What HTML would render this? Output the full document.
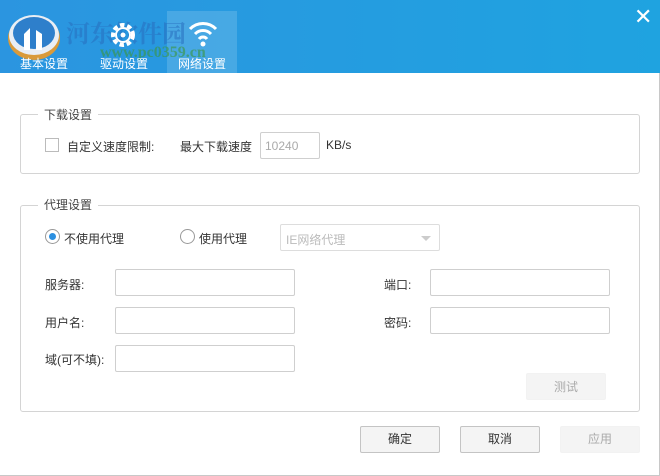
<!DOCTYPE html><html><head><meta charset="utf-8"><style>
*{margin:0;padding:0;box-sizing:border-box}
body{width:660px;height:476px;background:#fff;font-family:"Liberation Sans","Noto Sans CJK SC",sans-serif;font-size:12px;color:#333;position:relative;overflow:hidden;border-right:1px solid #c8c8c8;border-bottom:1px solid #c8c8c8}
.a{position:absolute}
.hdr{left:0;top:0;width:660px;height:73px;background:linear-gradient(90deg,#2b95e0,#1fa3e0)}
.tab{color:#fff;font-size:12px}
.grp{border:1px solid #d4d4d4;border-radius:3px}
.leg{background:#fff;padding:0 6px;color:#444}
.in{border:1px solid #cfcfcf;background:#fff;border-radius:2px}
.btn{border:1px solid #c4c4c4;background:#f4f4f4;border-radius:2px;text-align:center;line-height:24px;font-size:12px}
</style></head><body>
<div class="a hdr"></div>
<div class="a" style="left:167px;top:11px;width:70px;height:62px;background:rgba(255,255,255,0.15)"></div>
<svg class="a" style="left:6px;top:12px" width="56" height="50" viewBox="0 0 56 50"><ellipse cx="28" cy="26" rx="26" ry="22" fill="#d99a3a"/><ellipse cx="28" cy="23" rx="25" ry="20" fill="#e9eef4"/><ellipse cx="28" cy="21" rx="21" ry="16" fill="#2e7fcb"/><path d="M18 38V22l6-6v22zM30 38V18l6 4v16z" fill="#fff"/></svg>
<div class="a" style="left:66px;top:14px;font-size:24px;font-weight:bold;color:rgba(40,110,190,0.55);font-family:'Liberation Serif','Noto Serif CJK SC',serif">河东软件园</div>
<div class="a" style="left:100px;top:44px;font-size:16px;font-weight:bold;color:rgba(60,150,60,0.6);font-family:'Liberation Serif',serif">www.pc0359.cn</div>
<svg class="a" style="left:108px;top:20px" width="30" height="30" viewBox="0 0 30 30"><circle cx="15" cy="15" r="10" fill="none" stroke="#fff" stroke-width="4" stroke-dasharray="4.5 2.8"/><circle cx="15" cy="15" r="7" fill="none" stroke="#fff" stroke-width="2"/><circle cx="15" cy="15" r="2.5" fill="#fff"/></svg>
<svg class="a" style="left:187px;top:18px" width="32" height="30" viewBox="0 0 32 30"><path d="M3 11a18 18 0 0 1 26 0M8 16a11 11 0 0 1 16 0M12 21a5 5 0 0 1 8 0" fill="none" stroke="#fff" stroke-width="3"/><circle cx="16" cy="26" r="2.5" fill="#fff"/></svg>
<div class="a tab" style="left:20px;top:55px">基本设置</div>
<div class="a tab" style="left:100px;top:55px">驱动设置</div>
<div class="a tab" style="left:178px;top:55px">网络设置</div>
<div class="a" style="left:634px;top:4px;color:#fff;font-size:22px">✕</div>

<div class="a grp" style="left:20px;top:114px;width:620px;height:60px"></div>
<div class="a leg" style="left:38px;top:106px">下载设置</div>
<div class="a" style="left:45px;top:138px;width:14px;height:14px;border:1px solid #bbb"></div>
<div class="a" style="left:67px;top:138px">自定义速度限制:</div>
<div class="a" style="left:180px;top:138px">最大下载速度</div>
<div class="a in" style="left:260px;top:132px;width:60px;height:27px;color:#aaa;padding:6px 4px">10240</div>
<div class="a" style="left:326px;top:138px">KB/s</div>

<div class="a grp" style="left:20px;top:205px;width:620px;height:207px"></div>
<div class="a leg" style="left:38px;top:196px">代理设置</div>
<div class="a" style="left:45px;top:229px;width:15px;height:15px;border:1px solid #999;border-radius:50%"><div style="margin:3px;width:7px;height:7px;border-radius:50%;background:#2b8fe0"></div></div>
<div class="a" style="left:64px;top:230px">不使用代理</div>
<div class="a" style="left:180px;top:229px;width:15px;height:15px;border:1px solid #999;border-radius:50%"></div>
<div class="a" style="left:199px;top:230px">使用代理</div>
<div class="a in" style="left:280px;top:224px;width:160px;height:27px;color:#bbb;padding:6px 5px;border-color:#ddd">IE网络代理<span style="position:absolute;right:8px;top:11px;border:5px solid transparent;border-top-color:#ccc"></span></div>
<div class="a" style="left:45px;top:276px">服务器:</div>
<div class="a in" style="left:115px;top:269px;width:180px;height:27px"></div>
<div class="a" style="left:45px;top:314px">用户名:</div>
<div class="a in" style="left:115px;top:307px;width:180px;height:27px"></div>
<div class="a" style="left:45px;top:351px">域(可不填):</div>
<div class="a in" style="left:115px;top:345px;width:180px;height:27px"></div>
<div class="a" style="left:384px;top:276px">端口:</div>
<div class="a in" style="left:430px;top:269px;width:180px;height:27px"></div>
<div class="a" style="left:384px;top:314px">密码:</div>
<div class="a in" style="left:430px;top:307px;width:180px;height:27px"></div>
<div class="a btn" style="left:526px;top:373px;width:80px;height:27px;border-color:#f2f2f2;color:#aaa;line-height:27px">测试</div>
<div class="a btn" style="left:360px;top:426px;width:80px;height:27px;line-height:25px">确定</div>
<div class="a btn" style="left:460px;top:426px;width:80px;height:27px;line-height:25px">取消</div>
<div class="a btn" style="left:560px;top:426px;width:80px;height:27px;border-color:#f2f2f2;color:#aaa;line-height:25px">应用</div>
</body></html>
